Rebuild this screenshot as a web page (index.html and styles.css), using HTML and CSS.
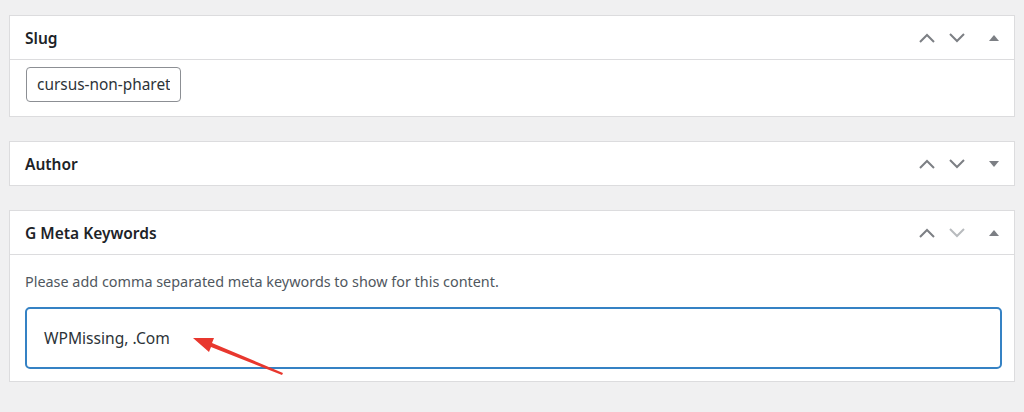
FILE: index.html
```html
<!DOCTYPE html>
<html>
<head>
<meta charset="utf-8">
<link rel="stylesheet" href="styles.css">
</head>
<body>
<div class="page">
  <section class="box">
    <header class="box-head">
      <h2 class="box-title">Slug</h2>
      <div class="box-actions">
        <svg class="chev" viewBox="0 0 18 12"><path d="M2 10 L9 3 L16 10"/></svg>
        <svg class="chev" viewBox="0 0 18 12"><path d="M2 2 L9 9 L16 2"/></svg>
        <svg class="tri" viewBox="0 0 10 6"><path d="M0 6 L5 0 L10 6 Z"/></svg>
      </div>
    </header>
    <div class="box-body slug-body">
      <input class="slug-input" type="text" value="cursus-non-pharetra">
    </div>
  </section>

  <section class="box">
    <header class="box-head no-border">
      <h2 class="box-title">Author</h2>
      <div class="box-actions">
        <svg class="chev" viewBox="0 0 18 12"><path d="M2 10 L9 3 L16 10"/></svg>
        <svg class="chev" viewBox="0 0 18 12"><path d="M2 2 L9 9 L16 2"/></svg>
        <svg class="tri" viewBox="0 0 10 6"><path d="M0 0 L5 6 L10 0 Z"/></svg>
      </div>
    </header>
  </section>

  <section class="box">
    <header class="box-head">
      <h2 class="box-title">G Meta Keywords</h2>
      <div class="box-actions">
        <svg class="chev" viewBox="0 0 18 12"><path d="M2 10 L9 3 L16 10"/></svg>
        <svg class="chev light" viewBox="0 0 18 12"><path d="M2 2 L9 9 L16 2"/></svg>
        <svg class="tri" viewBox="0 0 10 6"><path d="M0 6 L5 0 L10 6 Z"/></svg>
      </div>
    </header>
    <div class="box-body meta-body">
      <p class="desc">Please add comma separated meta keywords to show for this content.</p>
      <div class="kw-field">WPMissing, .Com</div>
    </div>
  </section>

  <svg class="arrow" width="1024" height="412" viewBox="0 0 1024 412">
    <path d="M283 373 L212 343 L214 338 L193 338 L209 352 L211 347 L282 375 Z" fill="#e8372e"/>
  </svg>
</div>
</body>
</html>
```

FILE: styles.css
```css
html, body {
  margin: 0;
  padding: 0;
  background: #f0f0f1;
}
body {
  font-family: "Noto Sans", "Open Sans", sans-serif;
  color: #1d2327;
  width: 1024px;
  height: 412px;
  overflow: hidden;
}
.page {
  position: relative;
  padding: 15px 9px 0 9px;
  display: flex;
  flex-direction: column;
  gap: 24px;
}
.box {
  background: #fff;
  border: 1px solid #dcdcde;
}
.box-head {
  height: 43px;
  display: flex;
  align-items: center;
  justify-content: space-between;
  border-bottom: 1px solid #dcdcde;
  padding: 0 15px 0 15px;
}
.box-head.no-border {
  border-bottom: none;
}
.box-title {
  margin: 0;
  font-size: 15.5px;
  font-weight: 600;
  color: #1d2327;
}
.box-actions {
  display: flex;
  align-items: center;
  gap: 12px;
}
.chev {
  width: 18px;
  height: 12px;
  fill: none;
  stroke: #7c7f84;
  stroke-width: 2;
}
.chev.light {
  stroke: #b8bbbe;
}
.tri {
  width: 10px;
  height: 6px;
  fill: #7c7f84;
  margin-left: 11px;
}
.box-body.slug-body {
  padding: 7px 16px 14px 16px;
}
.slug-input {
  width: 155px;
  height: 35px;
  box-sizing: border-box;
  border: 1px solid #8c8f94;
  border-radius: 4px;
  padding: 0 10px;
  font-family: "Noto Sans", "Open Sans", sans-serif;
  font-size: 15.4px;
  color: #2c3338;
  background: #fff;
  display: block;
}
.meta-body {
  padding: 17px 12px 12px 15px;
}
.desc {
  margin: 0 0 15px 0;
  font-size: 14.4px;
  color: #50575e;
  line-height: 20px;
}
.kw-field {
  height: 62px;
  box-sizing: border-box;
  border: 2px solid #3582c4;
  border-radius: 5px;
  padding: 0 17px;
  display: flex;
  align-items: center;
  font-size: 15.6px;
  color: #2c3338;
}
.arrow {
  position: absolute;
  left: 0;
  top: 0;
  pointer-events: none;
}
```
